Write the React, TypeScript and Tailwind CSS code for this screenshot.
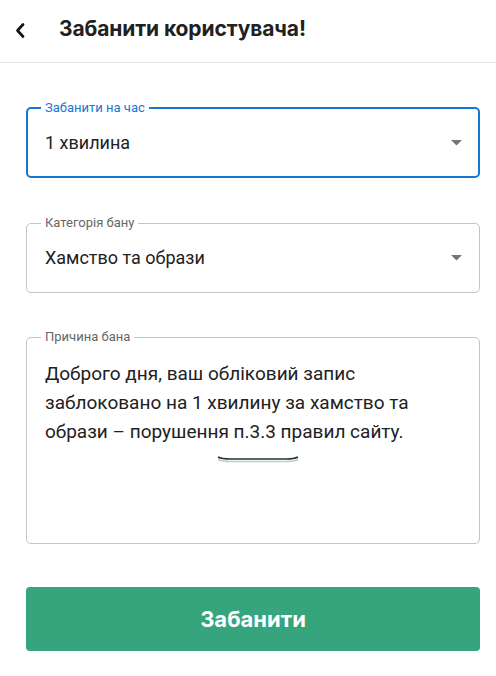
import React from 'react';

const Caret = () => (
  <svg width="11" height="6" viewBox="0 0 11 6" className="shrink-0">
    <path d="M0 0 L11 0 L5.5 5.5 Z" fill="#757575" />
  </svg>
);

const SelectField = ({ label, value, focused }: { label: string; value: string; focused?: boolean }) => (
  <fieldset
    className={
      focused
        ? 'border-2 border-[#1976d2] rounded-[5px] p-0 m-0 min-w-0'
        : 'border border-[#c4c4c4] rounded-[5px] p-0 m-0 min-w-0'
    }
  >
    <legend
      className={
        focused
          ? 'ml-[13px] px-[4px] text-[13px] leading-[16px] text-[#1976d2]'
          : 'ml-[14px] px-[4px] text-[13px] leading-[16px] text-[#666666]'
      }
    >
      {label}
    </legend>
    <div
      className={
        focused
          ? 'flex items-center justify-between pl-[17px] pr-[16px] pt-[15px] pb-[21px]'
          : 'flex items-center justify-between pl-[18px] pr-[17px] pt-[15px] pb-[22px]'
      }
    >
      <span className="text-[18px] leading-[24px] text-[#212121]">{value}</span>
      <Caret />
    </div>
  </fieldset>
);

export default function App() {
  return (
    <div className="w-[496px] min-h-[676px] bg-white" style={{ fontFamily: 'Roboto, "Noto Sans", sans-serif' }}>
      {/* Header */}
      <div className="h-[63px] flex items-center border-b border-[#e6e6e6]">
        <button className="w-[59px] h-full flex items-center pl-[15px] pb-[2px]">
          <svg width="10" height="15" viewBox="0 0 10 15">
            <path d="M8 1.5 L2.5 7.5 L8 13.5" fill="none" stroke="#111" strokeWidth="2.6" strokeLinecap="round" strokeLinejoin="round" />
          </svg>
        </button>
        <h1 className="text-[21px] font-bold text-[#212121] pb-[4px] tracking-[-0.1px]" style={{ fontFamily: 'Inter, sans-serif' }}>
          Забанити користувача!
        </h1>
      </div>

      <div className="pl-[26px] pr-[16px] pt-[37px] flex flex-col">
        <SelectField label="Забанити на час" value="1 хвилина" focused />

        <div className="mt-[37px]">
          <SelectField label="Категорія бану" value="Хамство та образи" />
        </div>

        {/* Reason */}
        <fieldset className="relative mt-[36px] border border-[#c4c4c4] rounded-[5px] p-0 m-0 min-w-0">
          <legend className="ml-[14px] px-[4px] text-[13px] leading-[16px] text-[#666666]">Причина бана</legend>
          <textarea
            readOnly
            className="block w-full h-[198px] resize-none outline-none pl-[18px] pr-[18px] pt-[14px] text-[19px] leading-[29px] text-[#212121] bg-transparent"
            value="Доброго дня, ваш обліковий запис заблоковано на 1 хвилину за хамство та образи – порушення п.3.3 правил сайту."
          />
          <svg width="84" height="8" viewBox="0 0 84 8" className="absolute left-[189px] top-[110px] pointer-events-none">
            <path d="M2 3 Q6 5 14 5 L70 5 Q78 5 82 3" fill="none" stroke="#c9c9c9" strokeWidth="1.5" transform="translate(0 1.5)" />
            <path d="M2 2 Q6 4 14 4 L70 4 Q78 4 82 2" fill="none" stroke="#1d3f26" strokeWidth="1.6" />
          </svg>
        </fieldset>

        <button
          className="mt-[43px] h-[64px] w-full rounded-[4px] bg-[#36a47c] text-white text-[22px] font-bold"
          style={{ fontFamily: 'Inter, sans-serif' }}
        >
          Забанити
        </button>
      </div>
    </div>
  );
}
